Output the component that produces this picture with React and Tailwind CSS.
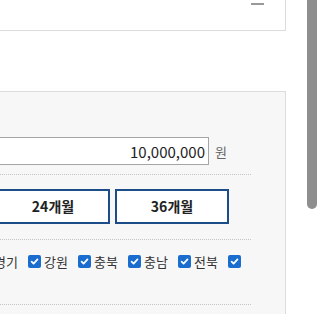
import React from "react";

function Check() {
  return (
    <span className="w-[13px] h-[13px] shrink-0 rounded-[2px] bg-[#1a6dcf] flex items-center justify-center">
      <svg width="9" height="9" viewBox="0 0 10 10">
        <path d="M1.8 5.2 L4 7.4 L8.3 2.6" fill="none" stroke="#fff" strokeWidth="1.9" strokeLinecap="round" strokeLinejoin="round" />
      </svg>
    </span>
  );
}

export default function App() {
  const regions = ["경기", "강원", "충북", "충남", "전북"];
  return (
    <div className="w-[319px] h-[314px] overflow-hidden flex bg-white font-['Noto_Sans_CJK_KR','Noto_Sans',sans-serif] text-[#333]">
      <div className="w-[307px] shrink-0 flex flex-col">
        <div className="w-[286px] h-[31px] shrink-0 border-b border-r border-[#dcdcdc] flex justify-end items-start pt-[3px] pr-[21px]">
          <span className="w-[13px] h-[2px] bg-[#999]" />
        </div>
        <div className="h-[60px] shrink-0" />
        <div className="w-[286px] flex-1 border-t border-r border-[#dcdcdc] bg-[#f7f7f7]">
          <div className="-ml-[60px] w-[311px]">
            <div className="pt-[45px] pb-[9px] border-b border-dotted border-[#c4c4c4] flex items-center">
              <div className="w-[269px] h-[28px] shrink-0 border border-[#a5a5a5] bg-white flex items-center justify-end pr-[3px] text-[15px] text-[#222] leading-none">
                10,000,000
              </div>
              <span className="ml-[6px] text-[13px] text-[#666] leading-none">원</span>
            </div>
            <div className="pt-[14px] pb-[15px] border-b border-dotted border-[#c4c4c4] flex gap-[5px] pl-[56px]">
              <div className="w-[114px] h-[35px] border-2 border-[#1d4d88] bg-white flex items-center justify-center font-bold text-[14px] text-[#222]">
                24개월
              </div>
              <div className="w-[114px] h-[35px] border-2 border-[#1d4d88] bg-white flex items-center justify-center font-bold text-[14px] text-[#222]">
                36개월
              </div>
            </div>
            <div className="h-[65px] pt-[11px] border-b border-dotted border-[#c4c4c4] flex items-start pl-[38px]">
              {regions.map((r) => (
                <div key={r} className="h-[20px] flex items-center mr-[8px] shrink-0">
                  <Check />
                  <span className="ml-[3px] text-[13px] leading-none text-[#333] w-[26px] whitespace-nowrap">{r}</span>
                </div>
              ))}
              <div className="h-[20px] flex items-center shrink-0">
                <Check />
              </div>
            </div>
          </div>
        </div>
      </div>
      <div className="w-[12px] shrink-0">
        <div className="w-[10px] h-[209px] bg-[#8e8e8e] rounded-b-[5px]" />
      </div>
    </div>
  );
}
